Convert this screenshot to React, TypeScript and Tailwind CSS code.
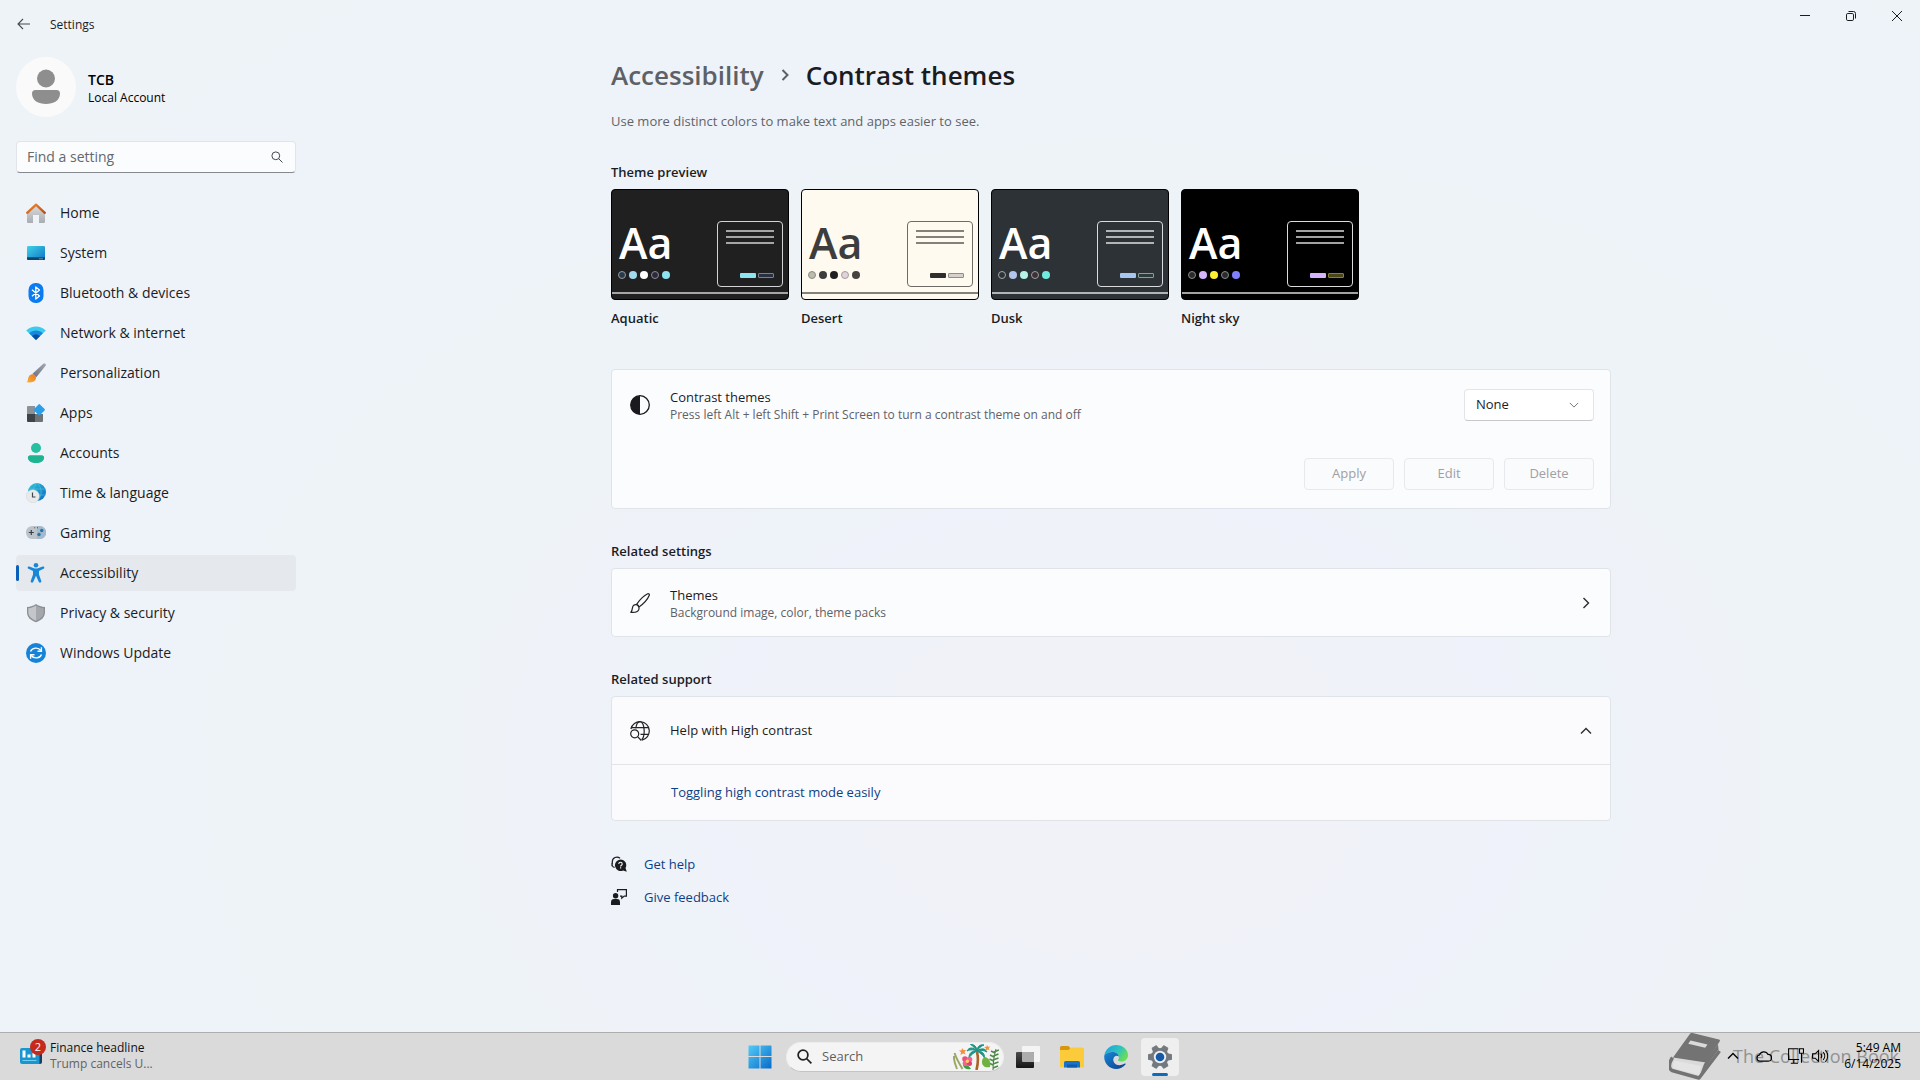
import type { ReactNode } from "react";

type IconProps = { className?: string };

/* ---------- line icons ---------- */

function ArrowLeft() {
    return (
        <svg width="14" height="12" viewBox="0 0 14 12" fill="none" stroke="#444b52" strokeWidth="1.1">
            <path d="M13 6H1M6 1 1 6l5 5" />
        </svg>
    );
}

function SearchIcon({ className = "" }: IconProps) {
    return (
        <svg className={className} viewBox="0 0 12 12" fill="none" stroke="currentColor">
            <circle cx="4.8" cy="4.8" r="3.9" />
            <path d="m7.6 7.6 3.9 3.9" />
        </svg>
    );
}

function Chevron({ className = "" }: IconProps) {
    return (
        <svg className={className} viewBox="0 0 12 12" fill="none" stroke="currentColor">
            <path d="m1 3.5 5 5 5-5" />
        </svg>
    );
}

function ContrastIcon() {
    return (
        <svg width="20" height="20" viewBox="0 0 20 20">
            <circle cx="10" cy="10" r="9.3" fill="none" stroke="#1a1a1e" strokeWidth="1.3" />
            <path d="M10 .7a9.3 9.3 0 0 0 0 18.6z" fill="#1a1a1e" />
        </svg>
    );
}

function BrushIcon() {
    return (
        <svg width="20" height="20" viewBox="0 0 20 20" fill="none" stroke="#222326" strokeWidth="1.2" strokeLinejoin="round">
            <path d="M6.6 11.3C9.6 7 14 2.6 17.7.8c.9-.4 2 .5 1.6 1.5C17.6 6.3 13.4 11 9 14" />
            <path d="M6.4 11.6c-2.2-.4-3.6 1-3.9 3C2.3 16.5 1.9 18 .8 19.3c3.5.3 7 0 8-2.7.6-1.8-.2-4.400-2.400-5z" />
            <path d="M6.6 11.3c1.3.5 2 1.4 2.4 2.7" />
        </svg>
    );
}

function GlobeSearchIcon() {
    return (
        <svg width="20" height="20" viewBox="0 0 20 20" fill="none" stroke="#222326" strokeWidth="1.2">
            <path d="M.9 8A9.3 9.3 0 1 1 12 19.1" />
            <path d="M1.4 6.6h17.2M10.5 13.3h8.2M5.8 7.5C6.3 3.5 8 .7 10 .7c2.400 0 4.200 4 4.200 9.300 0 4-1 7.400-2.600 8.700" />
            <circle cx="4.7" cy="12.8" r="4" />
            <path d="m7.6 15.7 3.7 3.8" />
        </svg>
    );
}

function GetHelpIcon() {
    return (
        <svg width="16" height="16" viewBox="0 0 16 16">
            <path d="M1.3 8.5V5.8A4.6 4.6 0 0 1 9 2.3M1 6.8v3.4M1.3 9.6c.3 1 1.3 1.6 2.3 1.7" fill="none" stroke="#1b1c1f" strokeWidth="1.2" />
            <path d="M9.5 3.4a5.8 5.8 0 0 1 5 8.7l1.3 3.6-3.7-1.2A5.8 5.8 0 1 1 9.5 3.4z" fill="#1b1c1f" />
            <path d="M7.8 7.9c0-2.200 3.400-2.200 3.400 0 0 1.300-1.600 1.300-1.600 2.500M9.600 11.200v1.200" fill="none" stroke="#fff" strokeWidth="1.1" />
        </svg>
    );
}

function FeedbackIcon() {
    return (
        <svg width="16" height="16" viewBox="0 0 16 16">
            <circle cx="4.6" cy="6.7" r="2.7" fill="#1b1c1f" />
            <path d="M0 16v-2.800C0 11 1.300 10 3 10h3.200c1.700 0 2.800 1 2.800 3.200V16z" fill="#1b1c1f" />
            <path d="M6.5 3V.6h8.900v6.500h-2.200l-2.400 2V7.100H9" fill="none" stroke="#1b1c1f" strokeWidth="1.2" />
        </svg>
    );
}

/* ---------- sidebar icons, all on a 20px grid ---------- */

function NavSvg({ children }: { children: ReactNode }) {
    return (
        <svg width="20" height="20" viewBox="0 0 20 20" className="shrink-0">
            {children}
        </svg>
    );
}

const HomeIcon = (
    <NavSvg>
        <defs>
            <linearGradient id="home-wall" x1="0" y1="0" x2="0" y2="1">
                <stop offset="0" stopColor="#dcdddf" />
                <stop offset="1" stopColor="#a9acb0" />
            </linearGradient>
            <linearGradient id="home-roof" x1="0" y1="0" x2="1" y2="1">
                <stop offset="0" stopColor="#f08a33" />
                <stop offset="1" stopColor="#bf4a14" />
            </linearGradient>
        </defs>
        <path d="M1 9.5 10 1.5l9 8V19a1 1 0 0 1-1 1h-5v-8H7v8H2a1 1 0 0 1-1-1z" fill="url(#home-wall)" />
        <path d="M1.2 9.8 10 1.6l8.8 8.2" fill="none" stroke="url(#home-roof)" strokeWidth="2.3" strokeLinecap="round" strokeLinejoin="round" />
    </NavSvg>
);

const SystemIcon = (
    <NavSvg>
        <defs>
            <linearGradient id="sys" x1="0" y1="0" x2="1" y2="1">
                <stop offset="0" stopColor="#3fd3e6" />
                <stop offset="1" stopColor="#0f74c8" />
            </linearGradient>
        </defs>
        <rect x="1" y="3" width="18" height="14" rx="1.3" fill="url(#sys)" />
        <path d="M1 14.300h18v1.400a1.300 1.300 0 0 1-1.300 1.300H2.300A1.300 1.300 0 0 1 1 15.700z" fill="#0b466f" />
        <path d="M13.5 15.2h1v1h-1zM15.5 15.2h1v1h-1z" fill="#a9e0f5" />
    </NavSvg>
);

const BluetoothIcon = (
    <NavSvg>
        <rect x="2.5" y="0" width="15" height="20" rx="7" fill="#0a7bf0" />
        <path d="m6 6.7 7.5 6.300L9.800 16V4l3.700 3L6 13.300" fill="none" stroke="#fff" strokeWidth="1.3" strokeLinejoin="round" />
    </NavSvg>
);

const NetworkIcon = (
    <NavSvg>
        <path d="M.2 7.4c5.400-5.200 14.200-5.200 19.600 0L10 17z" fill="#3ccbee" />
        <path d="M3.2 10.3c3.800-3.600 9.800-3.600 13.600 0L10 17z" fill="#1687dc" />
        <path d="M6 13c2.200-2.100 5.800-2.100 8 0l-4 4z" fill="#0c4da0" />
    </NavSvg>
);

const PersonalizationIcon = (
    <NavSvg>
        <defs>
            <linearGradient id="brush-handle" x1="0" y1="1" x2="1" y2="0">
                <stop offset="0" stopColor="#6c7280" />
                <stop offset="1" stopColor="#a2a8b1" />
            </linearGradient>
            <linearGradient id="brush-tip" x1="1" y1="0" x2="0" y2="1">
                <stop offset="0" stopColor="#e9772a" />
                <stop offset="1" stopColor="#f9b233" />
            </linearGradient>
        </defs>
        <path d="M6.5 10.800 17.300.8c1.500-1.100 3.200.4 2.300 2L10.300 14.300z" fill="url(#brush-handle)" />
        <path d="M6 11.200c2-.3 4.600 2.200 4 4.200-.8 3.100-3.700 4.400-9.300 3.900 1.300-1.400 1-2.700 1.600-4.600.6-2 2-3.200 3.700-3.500z" fill="url(#brush-tip)" />
    </NavSvg>
);

const AppsIcon = (
    <NavSvg>
        <path d="M1 4a1 1 0 0 1 1-1h7v8H1z" fill="#8c9196" />
        <path d="M1 11h8v8H2a1 1 0 0 1-1-1z" fill="#3f4347" />
        <path d="M9 11h8v7a1 1 0 0 1-1 1H9z" fill="#6d7277" />
        <path d="M12.500 1.400a1 1 0 0 1 1.500 0l4.600 4.600a1 1 0 0 1 0 1.400L14 12a1 1 0 0 1-1.500 0L8 7.400A1 1 0 0 1 8 6z" fill="#2a9fe8" />
    </NavSvg>
);

const AccountsIcon = (
    <NavSvg>
        <circle cx="10" cy="5" r="5" fill="#28bfa0" />
        <path d="M4.200 12.200h11.600c1.400 0 2.300 1 2.300 2.200 0 3.600-3.500 5.600-8.100 5.600s-8.100-2-8.100-5.600c0-1.200.9-2.200 2.300-2.200z" fill="#1eb391" />
    </NavSvg>
);

const TimeIcon = (
    <NavSvg>
        <defs>
            <linearGradient id="globe" x1="0" y1="0" x2="1" y2="1">
                <stop offset="0" stopColor="#2fc9d8" />
                <stop offset="1" stopColor="#1266c0" />
            </linearGradient>
        </defs>
        <circle cx="11" cy="9" r="9" fill="url(#globe)" />
        <path d="M2.800 6h16.400M3 12h16.600M11 0c-5 5-5 13 0 18M11 0c5.500 5 5.500 13 0 18" fill="none" stroke="#4fc3e6" strokeWidth=".6" />
        <circle cx="6.8" cy="13.200" r="6.500" fill="#e9eaec" stroke="#cfd2d6" strokeWidth=".5" />
        <path d="M6.500 9.500V14h3" fill="none" stroke="#3f464d" strokeWidth="1.2" />
    </NavSvg>
);

const GamingIcon = (
    <NavSvg>
        <rect x="0" y="3" width="20" height="13" rx="6.3" fill="#bcc3ca" />
        <path d="M11 3h2.700a6.500 6.500 0 0 1 0 13H11z" fill="#a3b9cc" />
        <path d="M5.300 7v5M2.800 9.500h5" stroke="#3a4046" strokeWidth="1.2" />
        <circle cx="15.7" cy="7.5" r="1.7" fill="#2477ab" />
        <circle cx="13" cy="11.5" r="1.7" fill="#2477ab" />
        <path d="M8.200 4.300h1v1h-1zM11 4.300h1v1h-1z" fill="#4b5258" />
    </NavSvg>
);

const AccessibilityIcon = (
    <NavSvg>
        <circle cx="10" cy="2.3" r="2.3" fill="#1a86d9" />
        <path
            d="M3.300 3.500 8 5.300c1.300.4 2.700.4 4 0l4.700-1.800c1.600-.4 2.300 1.600.8 2.300L13 8v3.600l2.300 6.300c.4 1.700-1.700 2.500-2.500 1L10 12.800 7.200 18.900c-.8 1.500-2.900.7-2.500-1L7 11.600V8L2.500 5.800C1 5.100 1.700 3.100 3.300 3.500z"
            fill="#1a86d9"
        />
    </NavSvg>
);

const PrivacyIcon = (
    <NavSvg>
        <path d="M10 1c2.500 1.900 5.500 2.700 9 2.900V9c0 5.300-3.500 8.300-9 10.300C4.500 17.300 1 14.300 1 9V3.900C4.500 3.700 7.500 2.900 10 1z" fill="#8b8f94" />
        <path d="M10 2.500v15.300C5.500 16 2.300 13.300 2.300 9V5.200c3-.2 5.500-1.100 7.700-2.700z" fill="#c3c6ca" />
        <path d="M10 2.500v15.300c4.500-1.800 7.700-4.500 7.700-8.800V5.200c-3-.2-5.500-1.100-7.700-2.700z" fill="#a4a8ad" />
    </NavSvg>
);

const UpdateIcon = (
    <NavSvg>
        <circle cx="10" cy="10" r="10" fill="#1583d8" />
        <path d="M4.500 8.600C6 4.700 12 3.700 14.800 7.500M15.500 11.400c-1.500 3.900-7.500 4.900-10.300 1.100" fill="none" stroke="#fff" strokeWidth="1.4" />
        <path d="M15.400 4.300v3.900h-3.900M4.600 15.700v-3.900h3.900" fill="none" stroke="#fff" strokeWidth="1.4" />
    </NavSvg>
);

const navItems = [
    { label: "Home", icon: HomeIcon },
    { label: "System", icon: SystemIcon },
    { label: "Bluetooth & devices", icon: BluetoothIcon },
    { label: "Network & internet", icon: NetworkIcon },
    { label: "Personalization", icon: PersonalizationIcon },
    { label: "Apps", icon: AppsIcon },
    { label: "Accounts", icon: AccountsIcon },
    { label: "Time & language", icon: TimeIcon },
    { label: "Gaming", icon: GamingIcon },
    { label: "Accessibility", icon: AccessibilityIcon, active: true },
    { label: "Privacy & security", icon: PrivacyIcon },
    { label: "Windows Update", icon: UpdateIcon },
];

/* ---------- title bar ---------- */

function TitleBar() {
    return (
        <header className="flex h-12 items-start justify-between">
            <div className="flex h-12 items-center gap-[19px] pl-[17px]">
                <button type="button" aria-label="Back">
                    <ArrowLeft />
                </button>
                <h1 className="pt-0.5 text-xs text-[#1b1c1f]">Settings</h1>
            </div>
            <div className="flex text-[#1b1c1f]">
                <button type="button" aria-label="Minimize" className="flex h-8 w-[46px] items-center justify-center">
                    <svg width="10" height="10" viewBox="0 0 10 10" stroke="currentColor">
                        <path d="M0 4.5h10" />
                    </svg>
                </button>
                <button type="button" aria-label="Restore" className="flex h-8 w-[46px] items-center justify-center">
                    <svg width="10" height="10" viewBox="0 0 10 10" fill="none" stroke="currentColor">
                        <rect x=".5" y="2.5" width="7" height="7" rx="1.3" />
                        <path d="M2.500.5h5a2 2 0 0 1 2 2v5" />
                    </svg>
                </button>
                <button type="button" aria-label="Close" className="flex h-8 w-[46px] items-center justify-center">
                    <svg width="10" height="10" viewBox="0 0 10 10" stroke="currentColor">
                        <path d="m0 0 10 10M10 0 0 10" />
                    </svg>
                </button>
            </div>
        </header>
    );
}

/* ---------- sidebar ---------- */

function Sidebar() {
    return (
        <aside className="w-[302px] shrink-0 pt-[9px] pr-1.5 pl-4">
            <div className="flex items-center gap-3">
                <div className="flex h-15 w-15 items-center justify-center rounded-full bg-[#fafafb]">
                    <svg width="28" height="36" viewBox="0 0 28 36" fill="#8e8e8e">
                        <circle cx="14" cy="9.5" r="9" />
                        <path d="M3.500 21h21A3.500 3.500 0 0 1 28 24.500C28 31.500 21.500 35 14 35S0 31.500 0 24.500A3.500 3.500 0 0 1 3.500 21z" />
                    </svg>
                </div>
                <div className="pt-0.5">
                    <p className="text-sm leading-5 font-semibold text-black">TCB</p>
                    <p className="text-xs leading-4 text-black">Local Account</p>
                </div>
            </div>

            <form role="search" className="mt-6 flex h-8 items-center rounded border border-[#e1e5ea] border-b-[#868a8f] bg-[#fbfcfe] pr-3 pl-2.5">
                <input
                    type="text"
                    aria-label="Find a setting"
                    placeholder="Find a setting"
                    className="min-w-0 flex-1 bg-transparent text-sm outline-none placeholder:text-[#65686d]"
                />
                <SearchIcon className="h-3 w-3 text-[#44484d]" />
            </form>

            <nav className="mt-[22px] flex flex-col gap-1">
                {navItems.map((item) => (
                    <a
                        key={item.label}
                        href="#"
                        aria-current={item.active ? "page" : undefined}
                        className={`flex h-9 items-center rounded text-sm text-[#1b1c1f] ${item.active ? "bg-[#e5e9ed]" : ""}`}
                    >
                        <span className={`h-4 w-[3px] rounded-full ${item.active ? "bg-[#0a5fb8]" : ""}`} />
                        <span className="mr-3.5 ml-[7px]">{item.icon}</span>
                        {item.label}
                    </a>
                ))}
            </nav>
        </aside>
    );
}

/* ---------- theme previews ---------- */

const themes = [
    {
        name: "Aquatic",
        surface: "bg-[#202020]",
        text: "text-white",
        frame: "border-[#d4d4d4]",
        line: "bg-[#a6a6a6]",
        primary: "bg-[#8ee3f0]",
        secondary: "border-[#7d8090] bg-[#263040]",
        dots: [
            "border border-[#9a9a9a] bg-[#263b50]",
            "bg-[#a2d9ee]",
            "bg-white",
            "border border-[#8e8a94] bg-[#2b2a3c]",
            "bg-[#8ee3f0]",
        ],
    },
    {
        name: "Desert",
        surface: "bg-[#fffaef]",
        text: "text-[#3d3d3d]",
        frame: "border-[#6e6b66]",
        line: "bg-[#85817a]",
        primary: "bg-[#2f2d2d]",
        secondary: "border-[#8f8c89] bg-[#d6cfcb]",
        dots: [
            "border border-[#8b8b84] bg-[#bdbbae]",
            "bg-[#3d3d3d]",
            "bg-[#202020]",
            "border border-[#a49ca0] bg-[#e1d3d9]",
            "bg-[#454240]",
        ],
    },
    {
        name: "Dusk",
        surface: "bg-[#2d3236]",
        text: "text-white",
        frame: "border-[#d9dbdc]",
        line: "bg-[#b2b4b6]",
        primary: "bg-[#a6c8f0]",
        secondary: "border-[#7fa49f] bg-[#2d3a3c]",
        dots: [
            "border border-[#a6a8aa] bg-[#2d3236]",
            "bg-[#b2c4ec]",
            "bg-[#b6f3e6]",
            "border border-[#a39da0] bg-[#3b3234]",
            "bg-[#70ebde]",
        ],
    },
    {
        name: "Night sky",
        surface: "bg-black",
        text: "text-white",
        frame: "border-[#dcdcdc]",
        line: "bg-[#a3a3a3]",
        primary: "bg-[#d6b4fd]",
        secondary: "border-[#89842c] bg-[#4a4618]",
        dots: [
            "border border-[#8a8a8a] bg-[#2b2b2b]",
            "bg-[#d6b4fd]",
            "bg-[#ffee32]",
            "border border-[#8a8a8a] bg-[#2b2b2b]",
            "bg-[#8080ff]",
        ],
    },
];

function ThemePreview({ theme }: { theme: (typeof themes)[number] }) {
    return (
        <figure className="w-[178px]">
            <div className={`flex h-[111px] flex-col overflow-hidden rounded border border-black ${theme.surface}`}>
                <div className="flex flex-1 items-end justify-between pr-[5px] pl-1.5">
                    <div className="pb-[13px]">
                        <p className={`mb-[3px] pl-px text-[43px] leading-[50px] font-semibold ${theme.text}`}>Aa</p>
                        <div className="flex gap-[3px]">
                            {theme.dots.map((dot, i) => (
                                <span key={i} className={`h-2 w-2 rounded-full ${dot}`} />
                            ))}
                        </div>
                    </div>
                    <div className={`mb-[5px] flex h-[66px] w-[66px] flex-col justify-between rounded border p-2 ${theme.frame}`}>
                        <div className="flex flex-col gap-1">
                            <span className={`h-0.5 ${theme.line}`} />
                            <span className={`h-0.5 ${theme.line}`} />
                            <span className={`h-0.5 ${theme.line}`} />
                        </div>
                        <div className="flex justify-end gap-0.5">
                            <span className={`h-[5px] w-4 rounded-[1px] ${theme.primary}`} />
                            <span className={`h-[5px] w-4 rounded-[1px] border ${theme.secondary}`} />
                        </div>
                    </div>
                </div>
                <div className={`mb-[5px] h-0.5 ${theme.line}`} />
            </div>
            <figcaption className="mt-2 text-[13px] leading-5 font-semibold">{theme.name}</figcaption>
        </figure>
    );
}

/* ---------- page ---------- */

function ContrastCard() {
    return (
        <section className="flex h-[140px] flex-col justify-between rounded border border-[#e0e4e9] bg-[#fbfcfe] px-4 pt-[17px] pb-[18px]">
            <div className="flex items-center">
                <span className="mr-5 ml-0.5">
                    <ContrastIcon />
                </span>
                <div className="flex-1">
                    <label htmlFor="contrast-theme" className="block text-[13px] leading-5">
                        Contrast themes
                    </label>
                    <p className="text-xs leading-4 text-[#5f6166]">Press left Alt + left Shift + Print Screen to turn a contrast theme on and off</p>
                </div>
                <div className="relative">
                    <select
                        id="contrast-theme"
                        defaultValue="None"
                        className="block h-8 w-[130px] appearance-none rounded border border-[#e3e5e9] border-b-[#c6c8cc] bg-white pl-[11px] text-[13px]"
                    >
                        <option>None</option>
                        <option>Aquatic</option>
                        <option>Desert</option>
                        <option>Dusk</option>
                        <option>Night sky</option>
                    </select>
                    <Chevron className="pointer-events-none absolute top-[11px] right-[15px] h-2.5 w-2.5 text-[#5a5d62]" />
                </div>
            </div>
            <div className="flex justify-end gap-2.5">
                {["Apply", "Edit", "Delete"].map((label) => (
                    <button key={label} type="button" disabled className="h-8 w-[90px] rounded border border-[#e7e9ed] bg-[#fafbfd] text-[13px] text-[#9ea0a4]">
                        {label}
                    </button>
                ))}
            </div>
        </section>
    );
}

function ContrastThemesPage() {
    return (
        <main className="min-w-0 flex-1 pt-[9px] text-[#1b1c1f]">
            <div className="mx-auto w-full max-w-[1000px]">
                <nav aria-label="Breadcrumb" className="flex items-center text-[26px] leading-9 font-semibold">
                    <a href="#" className="text-[#5d6166]">
                        Accessibility
                    </a>
                    <Chevron className="mx-[15px] h-3 w-3 -rotate-90 stroke-2 text-[#5d6166]" />
                    <h2>Contrast themes</h2>
                </nav>
                <p className="mt-[18px] text-[13px] leading-5 text-[#5f6368]">Use more distinct colors to make text and apps easier to see.</p>

                <h3 className="mt-[31px] text-[13px] leading-5 font-semibold">Theme preview</h3>
                <div className="mt-[7px] flex gap-3">
                    {themes.map((theme) => (
                        <ThemePreview key={theme.name} theme={theme} />
                    ))}
                </div>

                <div className="mt-[41px]">
                    <ContrastCard />
                </div>

                <h3 className="mt-8 text-[13px] leading-5 font-semibold">Related settings</h3>
                <a href="#" className="mt-[7px] flex h-[69px] items-center rounded border border-[#e0e4e9] bg-[#fbfcfe] px-4">
                    <span className="mr-5 ml-0.5">
                        <BrushIcon />
                    </span>
                    <span className="flex-1">
                        <span className="block text-[13px] leading-5">Themes</span>
                        <span className="block text-xs leading-4 text-[#5f6166]">Background image, color, theme packs</span>
                    </span>
                    <Chevron className="mr-0.5 h-3 w-3 -rotate-90 stroke-[1.4] text-[#2a2c30]" />
                </a>

                <h3 className="mt-8 text-[13px] leading-5 font-semibold">Related support</h3>
                <section className="mt-[7px] rounded border border-[#e0e4e9] bg-[#fbfbfd]">
                    <button type="button" aria-expanded="true" className="flex h-[68px] w-full items-center border-b border-[#e2e4e8] px-4 text-left">
                        <span className="mr-5 ml-0.5">
                            <GlobeSearchIcon />
                        </span>
                        <span className="flex-1 text-[13px]">Help with High contrast</span>
                        <Chevron className="mr-0.5 h-3 w-3 rotate-180 stroke-[1.4] text-[#2a2c30]" />
                    </button>
                    <div className="flex h-[55px] items-center pl-[59px]">
                        <a href="#" className="text-[13px] text-[#0c3f86]">
                            Toggling high contrast mode easily
                        </a>
                    </div>
                </section>

                <div className="mt-[33px] flex flex-col gap-[13px] text-[13px] leading-5 text-[#0c3f86]">
                    <a href="#" className="flex items-center gap-[17px]">
                        <GetHelpIcon />
                        Get help
                    </a>
                    <a href="#" className="flex items-center gap-[17px]">
                        <FeedbackIcon />
                        Give feedback
                    </a>
                </div>
            </div>
        </main>
    );
}

/* ---------- taskbar ---------- */

function PalmArt() {
    return (
        <svg width="46" height="26" viewBox="0 0 46 26" fill="none">
            <path d="M1.500 9c2 6 5 11 8 16M4 25C2 20 .5 16 1 12" stroke="#9aa765" strokeWidth="2" />
            <path d="M24 8c1.500 6 1 12-.5 18" stroke="#a8642a" strokeWidth="2.6" />
            <path d="M24 7C20 3 16 3 14 7c4-2 7-1 10 0zM24 7c-5-.5-8 2-8 6.500 3-3.500 5-5 8-6.500zM24 7c0-4-3-7-6.500-6.500C20 2 22 4 24 7zM24 7c0-4 3-7 7-6C28 2 26 4 24 7zM24 7c4-3 8-3 10 1-4-2-6-2-10-1zM24 7c5-.5 8 3 7.500 7C29 10 27 9 24 7z" fill="#1c9384" stroke="#1c9384" />
            <path d="M40 26c0-7 1-14 3-21" stroke="#3f7a3f" />
            <path d="m41 8 5-2M40.500 12l5-2M40 16l5.500-2M40 20l5.500-2M40 24l5-2M42 9l-4-2M41 13l-4-2M40.500 17l-4-2M40 21l-4-2" stroke="#4d8a45" strokeWidth="1.4" />
            <path d="M32 13c4 1 6 4 5 10-5 1-8-1-8-5 0-3 1-4 3-5z" fill="#6fb23f" />
            <path d="M10 21c3-1 6 0 8 4-4 1-7 0-8-4z" fill="#3e9c46" />
            <path d="m9 4 1.500 2L13 6l-1.500 2 1 2.500L10 9.500 7.500 11 8 8.200 6 6.500l2.600-.3zM34 1l1 1.800 2.200-.3-1.400 1.800.8 2-2-.8-1.800 1.200.1-2.200-1.700-1.400 2.200-.4z" fill="#f2913d" />
            <circle cx="12" cy="15" r="2.8" fill="#ec4f7f" />
            <circle cx="16.5" cy="15.5" r="2.8" fill="#f0648f" />
            <circle cx="12.5" cy="19.3" r="2.8" fill="#f0648f" />
            <circle cx="16.5" cy="19.5" r="2.5" fill="#e23f6e" />
            <circle cx="14.4" cy="17.3" r="1.7" fill="#ffd25e" />
        </svg>
    );
}

const gearTeeth = [0, 60, 120, 180, 240, 300];

function Taskbar() {
    return (
        <footer className="relative grid h-12 grid-cols-[1fr_auto_1fr] items-center border-t border-[#aeaeae] bg-[#dadada]">
            <button type="button" className="flex items-center gap-2 pb-px pl-5 text-left">
                <span className="relative">
                    <svg width="22" height="16" viewBox="0 0 22 16">
                        <path d="M3 2h19v12a2 2 0 0 1-2 2H8z" fill="#173d63" />
                        <path d="M2 0h17.500v16H2a2 2 0 0 1-2-2V2a2 2 0 0 1 2-2z" fill="#1b95d0" />
                        <path d="M2.500 2.500h3v7h-3zM7.500 6.500h3v3h-3zM12.500 4.500h3v5h-3z" fill="#fff" />
                        <path d="M2.500 12.500h14" stroke="#6fd0f0" />
                    </svg>
                    <span className="absolute -top-[9px] left-2.5 flex h-4 w-4 items-center justify-center rounded-full bg-[#c42b1c] text-[11px] leading-4 text-white">
                        2
                    </span>
                </span>
                <span className="text-xs leading-4">
                    <span className="block text-[#111]">Finance headline</span>
                    <span className="block text-[#636363]">Trump cancels U...</span>
                </span>
            </button>

            <div className="flex items-center">
                <button type="button" aria-label="Start" className="mr-1 flex h-10 w-11 items-center justify-center">
                    <svg width="24" height="24" viewBox="0 0 24 24">
                        <defs>
                            <linearGradient id="start" x1="0" y1="0" x2="24" y2="24" gradientUnits="userSpaceOnUse">
                                <stop offset="0" stopColor="#54cdf8" />
                                <stop offset="1" stopColor="#0669c8" />
                            </linearGradient>
                        </defs>
                        <path d="M1 .5h10.500V11H.5V1a.5.5 0 0 1 .5-.5zM12.500.5H23a.5.5 0 0 1 .5.5v10h-11zM.5 12h11v11.500H1a.5.5 0 0 1-.5-.5zM12.500 12h11v11a.5.5 0 0 1-.5.5H12.500z" fill="url(#start)" />
                    </svg>
                </button>
                <form role="search" className="mr-0.5 flex h-[30px] w-[218px] items-center rounded-full border border-[#ededed] border-b-[#c4c4c4] bg-[#f4f4f4] pr-1 pl-2.5">
                    <SearchIcon className="h-[15px] w-[15px] stroke-[1.4] text-[#202020]" />
                    <input
                        type="text"
                        aria-label="Search"
                        placeholder="Search"
                        className="mx-2.5 min-w-0 flex-1 bg-transparent text-[13px] outline-none placeholder:text-[#5e5e5e]"
                    />
                    <PalmArt />
                </form>
                <button type="button" aria-label="Task view" className="flex h-10 w-11 items-center justify-center">
                    <svg width="24" height="24" viewBox="0 0 24 24">
                        <defs>
                            <linearGradient id="task" x1="0" y1="0" x2="0" y2="1">
                                <stop offset="0" stopColor="#4a4a4a" />
                                <stop offset="1" stopColor="#161616" />
                            </linearGradient>
                        </defs>
                        <rect x="6" y="1" width="18" height="16" rx="1" fill="#f4f4f4" />
                        <rect x="0" y="7" width="18" height="16" rx="1" fill="url(#task)" />
                        <path d="M6 7h11a1 1 0 0 1 1 1v9H7a1 1 0 0 1-1-1z" fill="#adadad" />
                    </svg>
                </button>
                <button type="button" aria-label="File Explorer" className="flex h-10 w-11 items-center justify-center">
                    <svg width="26" height="24" viewBox="0 0 26 24">
                        <path d="M1 2.500A1.500 1.500 0 0 1 2.500 1h7L12 4v4H1z" fill="#d8960f" />
                        <path d="M1 5h8.500l2.500-2.500h11.500A1.500 1.500 0 0 1 25 4v17a1.500 1.500 0 0 1-1.500 1.500h-21A1.500 1.500 0 0 1 1 21z" fill="#fbcb3c" />
                        <path d="M5 17.500A1.500 1.500 0 0 1 6.500 16h13a1.500 1.500 0 0 1 1.500 1.500v5H5z" fill="#1673c9" />
                        <path d="M8 19.500h10v3H8z" fill="#0f5cab" />
                    </svg>
                </button>
                <button type="button" aria-label="Edge" className="flex h-10 w-11 items-center justify-center">
                    <svg width="24" height="24" viewBox="0 0 24 24">
                        <defs>
                            <linearGradient id="edge-top" x1="0" y1="0" x2="1" y2=".5">
                                <stop offset="0" stopColor="#1f9de0" />
                                <stop offset=".6" stopColor="#2cc3c0" />
                                <stop offset="1" stopColor="#68dc5a" />
                            </linearGradient>
                            <linearGradient id="edge-low" x1="0" y1="0" x2="1" y2="1">
                                <stop offset="0" stopColor="#1687d6" />
                                <stop offset="1" stopColor="#0d3f8c" />
                            </linearGradient>
                        </defs>
                        <path d="M.3 10.500C1.300 4.300 6.200 0 12.200 0 18.800 0 24 4.600 24 10c0 4-3 6.500-6.500 6.500-2.500 0-3.800-.8-3.400-1.700.8-1.200 1-2 .8-3.300C14.500 8.700 12 7 9 7 5 7 1.500 8.500.3 10.500z" fill="url(#edge-top)" />
                        <path d="M.3 10.500C1.500 8.200 5 7 8.500 7c3.500 0 6 1.800 6.400 4.500-2.400-2-5.300-.3-5.600 2.800-.4 4.600 4.800 8 11.500 4.200.6-.3 1.200.2.8.8C19.400 22.300 15.800 24 12 24 5.300 24-.6 18.300.3 10.500z" fill="url(#edge-low)" />
                    </svg>
                </button>
                <button type="button" aria-label="Settings" className="mx-[3px] flex h-[38px] w-[38px] flex-col items-center justify-end rounded bg-[#efefef]">
                    <svg width="24" height="24" viewBox="0 0 24 24" className="mb-1">
                        <g fill="#73797f">
                            {gearTeeth.map((angle) => (
                                <path key={angle} d="M8.800 5 9.600.4h4.800l.8 4.600z" stroke="#73797f" strokeLinejoin="round" transform={`rotate(${angle + 30} 12 12)`} />
                            ))}
                            <circle cx="12" cy="12" r="9" />
                        </g>
                        <circle cx="12" cy="12" r="6.2" fill="#eceff2" />
                        <circle cx="12" cy="12" r="4.3" fill="#1559a6" />
                    </svg>
                    <span className="h-[3px] w-4 rounded-full bg-[#0f6cbd]" />
                </button>
            </div>

            {/* Channel watermark, sits behind the tray text */}
            <div className="pointer-events-none absolute top-0 right-[21px] flex h-[46px] items-center gap-3">
                <svg width="52" height="47" viewBox="0 0 52 47">
                    <path d="M23.500 0 50 6.500c1 .3 1.200 1 .8 1.800L37 29.500 4 24.500 20.500 1.500C21.200.4 22 0 23.500 0z" fill="#737373" />
                    <path d="m21.500 7.500 17 4-2.300 3.200-17-4z" fill="#dadada" />
                    <path d="M3.500 24.500C-.5 31-.5 35.500 3 37.500L30 45 50.500 18" fill="none" stroke="#737373" strokeWidth="3.4" strokeLinejoin="round" />
                    <path d="M6 27.500 32 33l-2 9L5.500 35.500c-2.500-1.500-2-5 .5-8z" fill="#e4e4e4" />
                    <path d="m35 31 14-20 .5 5.500L31 42z" fill="#737373" />
                </svg>
                <span className="text-[18px] text-[#929292]">The Collection Book</span>
            </div>

            <div className="relative flex items-center justify-end pr-[19px] pb-px text-black">
                <Chevron className="mr-[17px] h-3 w-3 rotate-180 stroke-[1.4]" />
                <svg width="16" height="12" viewBox="0 0 16 12" fill="none" stroke="currentColor" strokeWidth="1.2" className="mr-4">
                    <path d="M3.800 11.200a3.200 3.200 0 0 1-.3-6.300A4.600 4.600 0 0 1 12 4.400a3.400 3.400 0 0 1 .3 6.800z" />
                </svg>
                <svg width="16" height="16" viewBox="0 0 16 16" fill="none" stroke="currentColor" strokeWidth="1.1" className="mr-2">
                    <path d="M10.500.7H.6v10.800h10.500M5.800 11.500v3.800M2.800 15.300H10M11.500.7h4v4.600h-4zM13.500 5.300v9.500" />
                </svg>
                <svg width="17" height="14" viewBox="0 0 17 14" fill="none" stroke="currentColor" strokeWidth="1.1">
                    <path d="M.6 4.800h2.600L6.600 1.500v11L3.200 9.200H.6zM8.900 4.800c1 1.300 1 3.100 0 4.400M11.200 3c2 2.300 2 5.700 0 8M13.400 1.200c3 3.500 3 8.100 0 11.600" />
                </svg>
                <div className="ml-[15px] text-right text-xs leading-4">
                    <p>5:49 AM</p>
                    <p>6/14/2025</p>
                </div>
            </div>
        </footer>
    );
}

export default function App() {
    return (
        <div className="flex min-h-screen flex-col bg-[#eef3fa] bg-[radial-gradient(ellipse_at_58%_72%,#f2f2f7_0%,#eff2fa_26%,#eef3f7_44%,#eef3fa_66%,#eef3f8_100%)] font-['Open_Sans','Noto_Sans',sans-serif]">
            <TitleBar />
            <div className="flex flex-1">
                <Sidebar />
                <ContrastThemesPage />
            </div>
            <Taskbar />
        </div>
    );
}
